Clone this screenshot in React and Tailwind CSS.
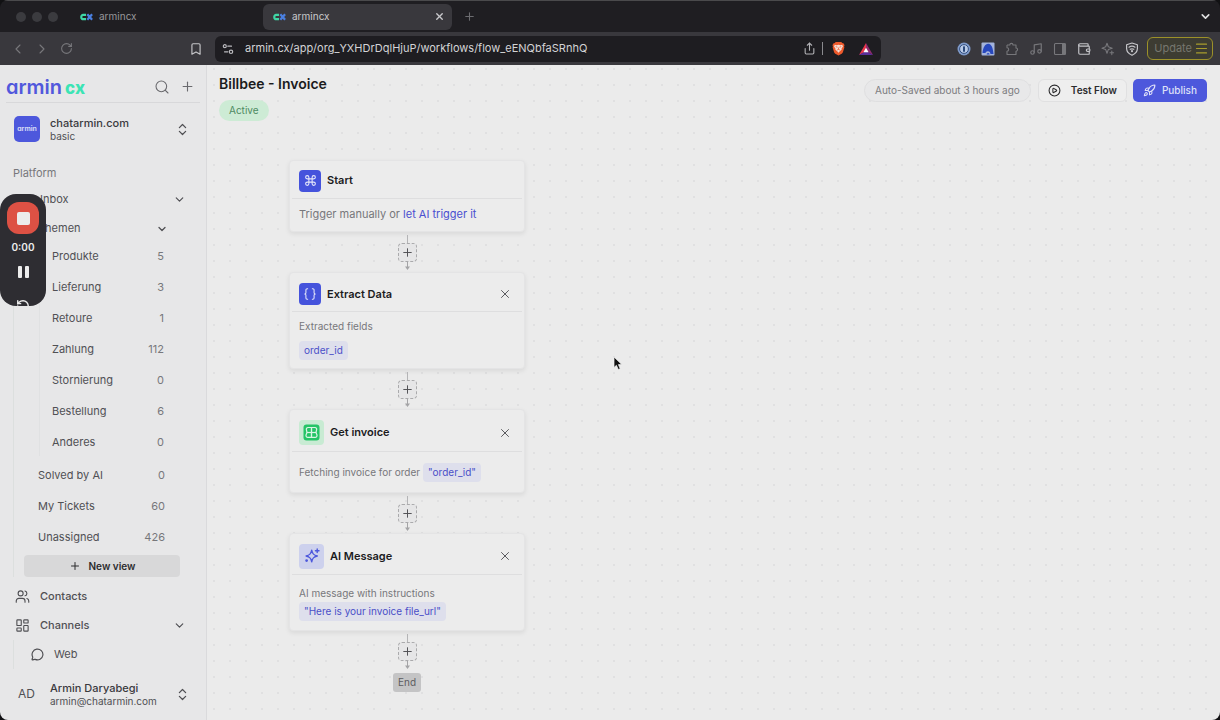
import React from "react";
import {
  ChevronLeft, ChevronRight, ChevronDown, ChevronsUpDown, RotateCw, Bookmark, Plus, X, Search,
  Command, Braces, Rocket, CirclePlay, Users, LayoutDashboard, MessageCircle, Share, Music,
  Wallet, Menu, RotateCcw,
} from "lucide-react";

function CxMark() {
  return (
    <svg viewBox="0 0 13 8" className="h-2 w-[13px] shrink-0" fill="none" strokeWidth="2.2" aria-hidden="true">
      <path d="M6 1.9H3.2A1.8 1.8 0 0 0 1.3 3.8v.5a1.8 1.8 0 0 0 1.9 1.9H6" stroke="#3fd6a4" />
      <path d="M7.3 1.2l4.8 5.6M12.1 1.2L7.3 6.8" stroke="#4a7fe0" />
    </svg>
  );
}

function SiteIcon() {
  return (
    <svg viewBox="0 0 12 12" className="size-3 shrink-0" fill="none" stroke="#b9b9bd" strokeWidth="1.2" strokeLinecap="round" aria-hidden="true">
      <circle cx="2.8" cy="3.2" r="1.5" />
      <path d="M5.8 3.2H9.500M2.500 8.8h3.300" />
      <circle cx="9" cy="8.8" r="1.700" />
    </svg>
  );
}

function BraveIcon() {
  return (
    <svg viewBox="0 0 14 16" className="h-[15px] w-[13px] shrink-0" aria-hidden="true">
      <path d="M4 1h6l1 1.2 1.6.3.9 2.1-.5 1 .3 1.2-1.6 5.2c-.3 1-1 1.500-1.800 2L7 15.500 4.100 14c-.8-.5-1.500-1-1.800-2L.7 6.800 1 5.600l-.5-1 .9-2.100L3 2.200z" fill="#ee5a2c" />
      <path d="M3 4l2 .5L7 4l2 .5 2-.5.8 1.800-1.600 2.400.3 1L8.400 11 7 12.500 5.600 11 3.500 9.200l.3-1L2.200 5.800z" fill="#f6ded6" />
      <path d="M4 6l2 .6M10 6l-2 .6M7 7v2M5.500 9.600L7 9l1.500.6" stroke="#ee5a2c" strokeWidth=".8" fill="none" />
    </svg>
  );
}

function BatIcon() {
  return (
    <svg viewBox="0 0 14 12" className="h-3 w-[14px] shrink-0" aria-hidden="true">
      <path d="M7 0L0 12l7-3.800z" fill="#e8364a" />
      <path d="M7 0l7 12-7-3.800z" fill="#8e2a6e" />
      <path d="M0 12h14L7 8z" fill="#5a2f9a" />
      <path d="M7 4.800L4.400 9.300h5.200z" fill="#fff" />
    </svg>
  );
}

function KeyholeIcon() {
  return (
    <svg viewBox="0 0 14 14" className="size-[14px]" aria-hidden="true">
      <circle cx="7" cy="7" r="6.500" fill="#7f9bcb" />
      <circle cx="7" cy="7" r="4.400" fill="#b9cbe8" stroke="#35507f" strokeWidth="1" />
      <rect x="6" y="4.200" width="2" height="5.600" rx=".6" fill="#2c4a7c" />
    </svg>
  );
}

function ArcIcon() {
  return (
    <svg viewBox="0 0 14 14" className="size-[14px]" aria-hidden="true">
      <rect x=".5" y=".5" width="13" height="13" rx="1" fill="#a3b3dc" />
      <path d="M1.500 11C2 6 4 1.800 7.200 1.800S12 6 12.500 12h-3a2.700 2.700 0 0 0-5.200-1z" fill="#2848bd" />
      <path d="M5.600 12.500a1.500 1.500 0 0 1 3 0z" fill="#2848bd" />
    </svg>
  );
}

function PuzzleIcon() {
  return (
    <svg viewBox="0 0 14 14" className="size-[14px]" fill="none" stroke="#77777b" strokeWidth="1.100" strokeLinejoin="round" aria-hidden="true">
      <path d="M2 3h2.800a1.600 1.600 0 0 1 3.200 0h3v3a1.600 1.600 0 0 1 0 3.200v3.300H8.300M2 3v2.800a1.600 1.600 0 0 1 0 3.400v3.300h6.300" />
    </svg>
  );
}

function PanelIcon() {
  return (
    <svg viewBox="0 0 14 14" className="size-[14px]" aria-hidden="true">
      <rect x="1.500" y="1.500" width="11" height="11" rx="1" fill="none" stroke="#77777b" strokeWidth="1.100" />
      <rect x="9" y="1.500" width="3.500" height="11" fill="#77777b" />
    </svg>
  );
}

function SparkleIcon() {
  return (
    <svg viewBox="0 0 14 14" className="size-[14px]" fill="none" stroke="#77777b" strokeWidth="1.100" strokeLinejoin="round" strokeLinecap="round" aria-hidden="true">
      <path d="M6 1.300l1.300 3.500 3.900 1.400-3.900 1.400L6 11.200 4.700 7.600 1 6.200l3.700-1.400z" />
      <path d="M10.800 9v3.600M9 10.800h3.600" />
    </svg>
  );
}

function VpnIcon() {
  return (
    <svg viewBox="0 0 14 14" className="size-[14px]" fill="none" stroke="#c4c4c8" strokeWidth="1.200" strokeLinejoin="round" strokeLinecap="round" aria-hidden="true">
      <path d="M7 1L12.400 2.700v3.800c0 3-2.200 5.300-5.400 6.800-3.200-1.500-5.400-3.800-5.400-6.800V2.700z" />
      <path d="M4 5.200c1.800-1.200 4.200-1.200 6 0M5.200 7.300c1.200-.7 2.400-.7 3.600 0" />
      <circle cx="7" cy="9.200" r=".5" />
    </svg>
  );
}

function BillbeeIcon() {
  return (
    <svg viewBox="0 0 17 17" className="size-[17px]" fill="none" aria-hidden="true">
      <rect x=".5" y=".5" width="16" height="16" rx="3" fill="#25c466" />
      <g stroke="#d9f5e4" strokeWidth="1.200" strokeLinejoin="round">
        <path d="M8.500 3.500H5a1.800 1.800 0 0 0-1.600 2.400L4 8.500l-.9 2.200a1.900 1.900 0 0 0 1.900 2.600h3.500z" />
        <path d="M8.500 3.500H12a1.800 1.800 0 0 1 1.600 2.400L13 8.500l.9 2.200a1.900 1.900 0 0 1-1.900 2.600H8.500z" />
        <path d="M3.800 8.500h9.400" />
      </g>
    </svg>
  );
}

function AiIcon() {
  return (
    <svg viewBox="0 0 18 18" className="size-[18px]" fill="none" stroke="#4d58dc" strokeWidth="1.400" strokeLinejoin="round" strokeLinecap="round" aria-hidden="true">
      <path d="M8.700 3.200c.7 3.700 1.900 4.900 5.600 5.800-3.700.9-4.900 2.100-5.600 5.800C8 11.100 6.800 9.900 3.100 9 6.800 8.100 8 6.900 8.700 3.200z" />
      <path d="M14.200 2v3.600M12.400 3.800H16" />
      <circle cx="3.600" cy="13.600" r=".7" fill="#4d58dc" />
    </svg>
  );
}

const iconBtn = "flex shrink-0 items-center justify-center";

function Browser() {
  return (
    <header className="shrink-0 text-[10px]">
      <div className="flex h-8 items-center border-t border-[#4a4a4c] bg-[#1f1e22] pr-2">
        <div className="flex w-[74px] shrink-0 items-center gap-[6px] pl-4">
          <span className="size-[10px] rounded-full bg-[#3b3b3f]" />
          <span className="size-[10px] rounded-full bg-[#3b3b3f]" />
          <span className="size-[10px] rounded-full bg-[#3b3b3f]" />
        </div>
        <button className="flex h-[26px] w-[189px] items-center gap-[6px] pl-[6px] text-[#97979b]">
          <CxMark />
          armincx
        </button>
        <div className="flex h-[26px] w-[189px] items-center rounded-md bg-[#39383d] pr-[7px] pl-[10px] text-[#c9c9cc]">
          <button className="flex flex-1 items-center gap-[6px]">
            <CxMark />
            armincx
          </button>
          <button aria-label="Close tab" className={iconBtn}><X size={11} strokeWidth={3} /></button>
        </div>
        <button aria-label="New tab" className={`${iconBtn} ml-[11px] text-[#6c6c70]`}><Plus size={13} strokeWidth={2} /></button>
        <button aria-label="Search tabs" className={`${iconBtn} ml-auto text-[#dededf]`}><ChevronDown size={13} strokeWidth={3} /></button>
      </div>
      <div className="flex h-[33px] items-center bg-[#39383d] pr-[7px]">
        <div className="flex w-[215px] shrink-0 items-center gap-2 pl-[10px] text-[#77777b]">
          <button aria-label="Back" className={iconBtn}><ChevronLeft size={16} strokeWidth={1.6} /></button>
          <button aria-label="Forward" className={iconBtn}><ChevronRight size={16} strokeWidth={1.6} /></button>
          <button aria-label="Reload" className={`${iconBtn} ml-[2px]`}><RotateCw size={13} strokeWidth={2} /></button>
          <button aria-label="Bookmark" className={`${iconBtn} mr-3 ml-auto text-[#c4c4c8]`}><Bookmark size={14} strokeWidth={2} /></button>
        </div>
        <div className="flex h-[26px] min-w-0 flex-1 items-center rounded-md bg-[#1e1d21] pr-2 pl-[7px]">
          <SiteIcon />
          <input
            aria-label="Address"
            defaultValue="armin.cx/app/org_YXHDrDqlHjuP/workflows/flow_eENQbfaSRnhQ"
            className="ml-[11px] min-w-0 flex-1 bg-transparent text-[11px] text-[#d3d3d5] outline-none"
          />
          <button aria-label="Share" className={`${iconBtn} text-[#b4b4b8]`}><Share size={13} strokeWidth={2} /></button>
          <span className="ml-[6px] h-[13px] w-px bg-[#8a8a8e]" />
          <button aria-label="Shields" className={`${iconBtn} ml-[9px]`}><BraveIcon /></button>
          <button aria-label="Rewards" className={`${iconBtn} ml-[14px]`}><BatIcon /></button>
        </div>
        <div className="ml-[76px] flex shrink-0 items-center gap-[10px] text-[#77777b]">
          <button aria-label="Passwords" className={iconBtn}><KeyholeIcon /></button>
          <button aria-label="Arc" className={iconBtn}><ArcIcon /></button>
          <button aria-label="Extensions" className={iconBtn}><PuzzleIcon /></button>
          <button aria-label="Media" className={iconBtn}><Music size={14} strokeWidth={2} /></button>
          <button aria-label="Side panel" className={iconBtn}><PanelIcon /></button>
          <button aria-label="Wallet" className={`${iconBtn} text-[#c4c4c8]`}><Wallet size={14} strokeWidth={2} /></button>
          <button aria-label="Assistant" className={iconBtn}><SparkleIcon /></button>
          <button aria-label="VPN" className={iconBtn}><VpnIcon /></button>
        </div>
        <button className="ml-2 flex h-[23px] shrink-0 items-center gap-[2px] rounded-md border border-[#9c9129] bg-[#3d3c32] pr-[3px] pl-[6px] text-[11px] text-[#77776f]">
          Update
          <Menu size={15} strokeWidth={1.8} className="text-[#a89c2c]" />
        </button>
      </div>
    </header>
  );
}

const topics = [
  ["Produkte", 5], ["Lieferung", 3], ["Retoure", 1], ["Zahlung", 112],
  ["Stornierung", 0], ["Bestellung", 6], ["Anderes", 0],
];
const views = [["Solved by AI", 0], ["My Tickets", 60], ["Unassigned", 426]];

function CountRow({ label, count }) {
  return (
    <a href="#" className="flex h-[27px] items-center justify-between text-[#505054]">
      {label}
      <span className="text-[#77777b]">{count}</span>
    </a>
  );
}

function Sidebar() {
  return (
    <aside className="flex w-[207px] shrink-0 flex-col border-r border-[#dadadc] bg-[#e7e7e8] text-[11px] text-[#505054]">
      <div className="mx-[6px] flex h-[38px] items-center border-b border-[#d8d8da] pt-[6px]">
        <a href="#" aria-label="armin cx" className="flex flex-1 items-baseline gap-[3px] leading-none font-semibold [font-feature-settings:'cv11']">
          <span className="text-[20px] text-[#5158dc]">armin</span>
          <span className="text-[17px] font-extrabold text-[#3ce4b4]">cx</span>
        </a>
        <button aria-label="Search" className={`${iconBtn} mr-[10px] text-[#6a6a6e]`}><Search size={16} strokeWidth={1.6} /></button>
        <button aria-label="New" className={`${iconBtn} mr-[5px] text-[#6a6a6e]`}><Plus size={15} strokeWidth={1.8} /></button>
      </div>
      <button className="flex h-[52px] items-center pr-4 pl-[14px] text-left">
        <span className="flex size-[26px] items-center justify-center rounded-[5px] bg-[#4d58dc] text-[7px] font-semibold text-[#dfe1f8] [font-feature-settings:'cv11']">armin</span>
        <span className="ml-[10px] flex-1">
          <span className="block leading-[14px] font-medium text-[#3a3a3e]">chatarmin.com</span>
          <span className="block text-[10px] leading-[12px]">basic</span>
        </span>
        <ChevronsUpDown size={15} strokeWidth={2} />
      </button>
      <div className="flex h-[30px] items-center pt-[7px] pl-[13px] text-[#77777b]">Platform</div>
      <button className="flex h-[29px] items-center justify-between pr-5 pl-10">
        Inbox
        <ChevronDown size={13} strokeWidth={2.2} />
      </button>
      <div className="ml-[13px] border-l border-[#dcdfde]">
        <button className="flex h-[29px] w-full items-center justify-between pr-[38px] pl-6">
          Themen
          <ChevronDown size={12} strokeWidth={2.6} />
        </button>
        <div className="ml-[25px] flex flex-col gap-1 border-l border-[#e0e1e2] pr-[42px] pl-3">
          {topics.map(([label, count]) => <CountRow key={label} label={label} count={count} />)}
        </div>
        <div className="mt-[6px] flex flex-col gap-1 pr-[41px] pl-6">
          {views.map(([label, count]) => <CountRow key={label} label={label} count={count} />)}
        </div>
        <button className="mt-1 mr-[26px] ml-[10px] flex h-[22px] w-[156px] items-center justify-center gap-2 rounded-[4px] bg-[#d8d8d9] text-[10px] font-semibold text-[#2c2c2e]">
          <Plus size={12} strokeWidth={2} />
          New view
        </button>
      </div>
      <a href="#" className="mt-[5px] flex h-[29px] items-center gap-[10px] pl-[15px] font-medium">
        <Users size={15} strokeWidth={1.8} />
        Contacts
      </a>
      <button className="flex h-[29px] items-center gap-[10px] pr-5 pl-[15px] font-medium">
        <LayoutDashboard size={15} strokeWidth={1.8} />
        <span className="flex-1 text-left">Channels</span>
        <ChevronDown size={13} strokeWidth={2.2} />
      </button>
      <a href="#" className="ml-[13px] flex h-[29px] items-center gap-[10px] border-l border-[#dcdfde] pl-[17px]">
        <MessageCircle size={13} strokeWidth={2.2} />
        Web
      </a>
      <button className="flex h-[50px] items-center pr-4 pl-[18px] text-left">
        <span className="w-8 text-[12px]">AD</span>
        <span className="flex-1">
          <span className="block leading-[14px] font-medium text-[#3a3a3e]">Armin Daryabegi</span>
          <span className="block text-[10px] leading-[12px]">armin@chatarmin.com</span>
        </span>
        <ChevronsUpDown size={15} strokeWidth={2} />
      </button>
    </aside>
  );
}

function Card({ icon, title, closable = true, children, headerClass, bodyClass }) {
  return (
    <section className="w-[236px] rounded-[4px] border border-[#e4e4e5] bg-[#ececec] shadow-[0_2px_5px_rgba(0,0,0,0.08)]">
      <div className={`mx-[2px] flex items-center border-b border-[#dededf] px-[7px] ${headerClass}`}>
        {icon}
        <h2 className="flex-1 text-[11px] font-semibold text-[#1b1b1d]">{title}</h2>
        {closable && (
          <button aria-label={`Remove ${title}`} className={`${iconBtn} mr-[3px] text-[#505054]`}><X size={14} strokeWidth={1.6} /></button>
        )}
      </div>
      <div className={`px-[9px] text-[10px] text-[#77777b] ${bodyClass}`}>{children}</div>
    </section>
  );
}

function Tile({ children }) {
  return <span className="mr-[6px] flex size-[22px] items-center justify-center rounded-[4px] bg-[#4553dc] text-[#e6e8fa]">{children}</span>;
}

function Chip({ children }) {
  return <code className="inline-flex h-[19px] items-center rounded-[4px] bg-[#dedfec] px-[5px] font-[inherit] text-[#4a4fc8]">{children}</code>;
}

function Connector() {
  return (
    <div className="flex w-[236px] flex-col items-center pt-[3px] pb-[2px]">
      <span className="h-2 w-px bg-[#b4b4b6]" />
      <button aria-label="Add step" className="flex size-[19px] items-center justify-center rounded-[4px] border border-dashed border-[#aaaaac] bg-[#e6e6e7] text-[#505054]">
        <Plus size={13} strokeWidth={1.8} />
      </button>
      <svg viewBox="0 0 5 8" className="h-2 w-[5px]" aria-hidden="true">
        <path d="M2.500 0v5" stroke="#a4a4a6" />
        <path d="M0 4.500h5L2.500 8z" fill="#a4a4a6" />
      </svg>
    </div>
  );
}

function Canvas() {
  return (
    <main className="relative min-w-0 flex-1 bg-[#ebebeb] bg-[radial-gradient(circle,#e0e0e1_1px,transparent_1px)] bg-[size:16px_16px] bg-[position:15px_12px]">
      <div className="flex items-start justify-between pt-[10px] pr-[13px] pl-3">
        <div>
          <h1 className="text-[14px] leading-[18px] font-semibold text-[#1b1b1d]">Billbee - Invoice</h1>
          <span className="mt-[7px] inline-flex h-[21px] items-center rounded-full bg-[#cdebd5] px-[10px] text-[10px] text-[#4e8a62]">Active</span>
        </div>
        <div className="flex items-center pt-1 text-[10px]">
          <span className="flex h-[23px] items-center rounded-full border border-[#dfdfe0] bg-[#e8e8e9] px-[10px] text-[#7c7c80]">Auto-Saved about 3 hours ago</span>
          <button className="ml-[7px] flex h-[23px] items-center gap-[10px] rounded-md border border-[#e0e0e1] bg-[#eeeeee] px-[9px] font-semibold text-[#2c2c2e]">
            <CirclePlay size={13} strokeWidth={2} />
            Test Flow
          </button>
          <button className="ml-[6px] flex h-[23px] items-center gap-[6px] rounded-[5px] bg-[#4d58dc] px-[10px] font-medium text-[#dfe1f8]">
            <Rocket size={13} strokeWidth={2} />
            Publish
          </button>
        </div>
      </div>
      <div className="mt-[39px] ml-[82px] flex flex-col items-start">
        <Card title="Start" closable={false} icon={<Tile><Command size={13} strokeWidth={2} /></Tile>} headerClass="h-[38px] pt-[2px]" bodyClass="flex h-[32px] items-center pb-[2px]">
          <p className="text-[11px]">Trigger manually or <a href="#" className="text-[#4a4fd0]">let AI trigger it</a></p>
        </Card>
        <Connector />
        <Card title="Extract Data" icon={<Tile><Braces size={14} strokeWidth={1.8} /></Tile>} headerClass="h-[39px] pt-[4px]" bodyClass="flex h-[56px] flex-col items-start pt-[6px]">
          <p className="mb-[7px] leading-4">Extracted fields</p>
          <Chip>order_id</Chip>
        </Card>
        <Connector />
        <Card title="Get invoice" icon={<span className="mr-[6px] flex size-[25px] items-center justify-center rounded-[4px] bg-[#c8ebd3]"><BillbeeIcon /></span>} headerClass="h-[42px] pt-[4px]" bodyClass="flex h-[40px] items-center gap-[3px]">
          <p>Fetching invoice for order</p>
          <Chip>"order_id"</Chip>
        </Card>
        <Connector />
        <Card title="AI Message" icon={<span className="mr-[6px] flex size-[25px] items-center justify-center rounded-[4px] bg-[#cdd1ed]"><AiIcon /></span>} headerClass="h-[41px] pt-[4px]" bodyClass="flex h-[55px] flex-col items-start pt-[10px]">
          <p className="mb-[1px] leading-4">AI message with instructions</p>
          <Chip>"Here is your invoice file_url"</Chip>
        </Card>
        <Connector />
        <div className="flex w-[236px] justify-center pt-[2px]">
          <span className="flex h-[19px] items-center rounded-[3px] bg-[#c4c4c5] px-[5px] text-[10px] text-[#5c5c60]">End</span>
        </div>
      </div>
    </main>
  );
}

function Recorder() {
  return (
    <div className="absolute top-[194px] left-0 flex h-[112px] w-[46px] flex-col items-center overflow-hidden rounded-2xl bg-[#2e2d32] pt-2 text-[#ececec]">
      <button aria-label="Stop recording" className="flex size-8 shrink-0 items-center justify-center rounded-xl bg-[#dd5144]">
        <span className="size-[13px] rounded-[2px] bg-[#ececec]" />
      </button>
      <span className="mt-[7px] text-[10px] leading-3 font-semibold">0:00</span>
      <button aria-label="Pause" className="mt-[13px] flex h-3 shrink-0 gap-[3px]">
        <span className="h-full w-1 rounded-[1px] bg-[#ececec]" />
        <span className="h-full w-1 rounded-[1px] bg-[#ececec]" />
      </button>
      <button aria-label="Restart" className="mt-[21px] shrink-0"><RotateCcw size={14} strokeWidth={2.4} /></button>
    </div>
  );
}

function Pointer() {
  return (
    <svg viewBox="0 0 10 15" className="pointer-events-none absolute top-[356px] left-[613px] h-[15px] w-[10px]" aria-hidden="true">
      <path d="M1 1v10.500l2.400-2.200 1.900 4.200 1.900-.8-1.800-4.100h3.400z" fill="#111" stroke="#f4f4f4" strokeWidth=".7" />
    </svg>
  );
}

export default function App() {
  return (
    <div className="min-h-screen bg-[#111113] font-['Inter',sans-serif]">
      <div className="relative flex min-h-screen flex-col overflow-hidden rounded-lg">
        <Browser />
        <div className="flex flex-1">
          <Sidebar />
          <Canvas />
        </div>
        <Recorder />
        <Pointer />
      </div>
    </div>
  );
}
